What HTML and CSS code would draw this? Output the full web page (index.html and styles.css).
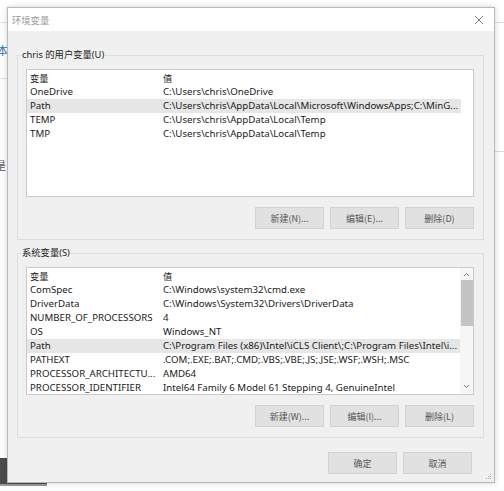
FILE: index.html
```html
<!DOCTYPE html>
<html>
<head>
    <meta charset="utf-8">
    <meta name="viewport" content="width=device-width, initial-scale=1">
    <link rel="stylesheet" href="styles.css">
</head>

<body>
    <div class="desktop">
        <div class="bgLine bgLineTop"></div>
        <div class="bgLine bgLineMid"></div>
        <div class="bgLine bgLineRight"></div>
        <span class="bgChar bgCharBlue">本</span>
        <span class="bgChar bgCharDark">是</span>
        <div class="taskBox"></div>

        <div class="dialog">
            <div class="titleBar">
                <span class="title">环境变量</span>
                <span class="closeBtn">
                    <svg width="10" height="10" viewBox="0 0 10 10">
                        <path d="M1 1 L9 9 M9 1 L1 9" stroke="#6d6d6d" stroke-width="0.9" fill="none"/>
                    </svg>
                </span>
            </div>

            <div class="dialogBody">
                <div class="group groupUser">
                    <span class="legend">chris 的用户变量(U)</span>
                    <div class="list listUser">
                        <table class="varTable">
                            <tr class="headRow"><td class="nameCol">变量</td><td>值</td></tr>
                            <tr><td class="nameCol">OneDrive</td><td>C:\Users\chris\OneDrive</td></tr>
                            <tr class="selRow"><td class="nameCol">Path</td><td>C:\Users\chris\AppData\Local\Microsoft\WindowsApps;C:\MinG...</td></tr>
                            <tr><td class="nameCol">TEMP</td><td>C:\Users\chris\AppData\Local\Temp</td></tr>
                            <tr><td class="nameCol">TMP</td><td>C:\Users\chris\AppData\Local\Temp</td></tr>
                        </table>
                    </div>
                    <div class="btnRow">
                        <button type="button" class="winButton">新建(N)...</button>
                        <button type="button" class="winButton">编辑(E)...</button>
                        <button type="button" class="winButton">删除(D)</button>
                    </div>
                </div>

                <div class="group groupSys">
                    <span class="legend">系统变量(S)</span>
                    <div class="list listSys">
                        <table class="varTable">
                            <tr class="headRow"><td class="nameCol">变量</td><td>值</td></tr>
                            <tr><td class="nameCol">ComSpec</td><td>C:\Windows\system32\cmd.exe</td></tr>
                            <tr><td class="nameCol">DriverData</td><td>C:\Windows\System32\Drivers\DriverData</td></tr>
                            <tr><td class="nameCol">NUMBER_OF_PROCESSORS</td><td>4</td></tr>
                            <tr><td class="nameCol">OS</td><td>Windows_NT</td></tr>
                            <tr class="selRow"><td class="nameCol">Path</td><td>C:\Program Files (x86)\Intel\iCLS Client\;C:\Program Files\Intel\i...</td></tr>
                            <tr><td class="nameCol">PATHEXT</td><td>.COM;.EXE;.BAT;.CMD;.VBS;.VBE;.JS;.JSE;.WSF;.WSH;.MSC</td></tr>
                            <tr><td class="nameCol">PROCESSOR_ARCHITECTU...</td><td>AMD64</td></tr>
                            <tr><td class="nameCol">PROCESSOR_IDENTIFIER</td><td>Intel64 Family 6 Model 61 Stepping 4, GenuineIntel</td></tr>
                        </table>
                        <div class="scrollBar">
                            <svg class="arrowUp" width="7" height="5" viewBox="0 0 7 5">
                                <path d="M1 4 L3.5 1.5 L6 4" stroke="#7a7a7a" stroke-width="1" fill="none"/>
                            </svg>
                            <div class="scrollThumb"></div>
                            <svg class="arrowDown" width="7" height="5" viewBox="0 0 7 5">
                                <path d="M1 1 L3.5 3.5 L6 1" stroke="#7a7a7a" stroke-width="1" fill="none"/>
                            </svg>
                        </div>
                    </div>
                    <div class="btnRow">
                        <button type="button" class="winButton">新建(W)...</button>
                        <button type="button" class="winButton">编辑(I)...</button>
                        <button type="button" class="winButton">删除(L)</button>
                    </div>
                </div>

                <div class="btnRow dialogButtons">
                    <button type="button" class="winButton">确定</button>
                    <button type="button" class="winButton">取消</button>
                </div>
            </div>

            <svg class="grip" width="6" height="6" viewBox="0 0 6 6">
                <rect x="4" y="0" width="1" height="1" fill="#b0b0b0"/>
                <rect x="2" y="2" width="1" height="1" fill="#b0b0b0"/>
                <rect x="4" y="2" width="1" height="1" fill="#b0b0b0"/>
                <rect x="0" y="4" width="1" height="1" fill="#b0b0b0"/>
                <rect x="2" y="4" width="1" height="1" fill="#b0b0b0"/>
                <rect x="4" y="4" width="1" height="1" fill="#b0b0b0"/>
            </svg>
        </div>
    </div>
</body>
</html>
```

FILE: styles.css
```css
body {
    margin: 0;
    background: #ffffff;
    font-family: "Noto Sans", "Noto Sans CJK SC", sans-serif;
    color: #1a1a1a;
}

.desktop {
    position: relative;
    width: 504px;
    height: 491px;
    overflow: hidden;
    background: #ffffff;
}

/* bits of the window behind the dialog */
.bgLine {
    position: absolute;
    height: 1px;
    background: #dedede;
}

.bgLineTop {
    left: 0;
    top: 22px;
    width: 504px;
}

.bgLineMid {
    left: 0;
    top: 78px;
    width: 8px;
}

.bgLineRight {
    left: 495px;
    top: 151px;
    width: 9px;
}

.bgChar {
    position: absolute;
    font-family: "Noto Sans CJK SC", sans-serif;
    font-size: 11px;
}

.bgCharBlue {
    left: -3px;
    top: 42px;
    color: #2f6fb8;
}

.bgCharDark {
    left: -5px;
    top: 157px;
    color: #555555;
}

.taskBox {
    position: absolute;
    left: 0;
    top: 458px;
    width: 47px;
    height: 26px;
    background: #4b4b4b;
    border-bottom: 2px solid #9a9a9a;
}

/* dialog window */
.dialog {
    position: absolute;
    left: 7px;
    top: 7px;
    width: 486px;
    height: 474px;
    border: 1px solid #b9b9b9;
    background: #f0f0f0;
    box-shadow: 0 0 6px rgba(0, 0, 0, 0.18);
    display: flex;
    flex-direction: column;
}

.titleBar {
    height: 23px;
    background: #ffffff;
    display: flex;
    align-items: center;
    justify-content: space-between;
    padding: 0 10px 0 4px;
}

.title {
    font-family: "Noto Sans CJK SC", sans-serif;
    font-size: 9.3px;
    color: #9a9a9a;
}

.closeBtn {
    display: flex;
    align-items: center;
}

.dialogBody {
    flex: 1;
    padding: 24px 10px 0 9px;
    display: flex;
    flex-direction: column;
}

.group {
    position: relative;
    border: 1px solid #dcdcdc;
    padding: 13px 9px 10px 8px;
}

.groupSys {
    margin-top: 13px;
}

.legend {
    position: absolute;
    left: 3px;
    top: -8px;
    padding: 0 1px;
    background: #f0f0f0;
    font-size: 9.3px;
    line-height: 14px;
    color: #222222;
}

.list {
    position: relative;
    background: #ffffff;
    border: 1px solid #c9c9c9;
}

.listUser {
    height: 126px;
}

.listSys {
    height: 126px;
}

.varTable {
    width: 434px;
    margin-top: 1px;
    table-layout: fixed;
    border-collapse: collapse;
    font-size: 9.7px;
}

.varTable td {
    height: 14px;
    padding: 0 0 0 3px;
    white-space: nowrap;
    overflow: hidden;
    line-height: 14px;
}

.varTable .nameCol {
    width: 130px;
}

.headRow td {
    font-family: "Noto Sans CJK SC", sans-serif;
    font-size: 9.3px;
}

.selRow td {
    background: #e6e6e6;
}

.scrollBar {
    position: absolute;
    right: 0;
    top: 0;
    bottom: 0;
    width: 13px;
    background: #f6f6f6;
    display: flex;
    flex-direction: column;
    align-items: center;
}

.arrowUp {
    margin-top: 4px;
}

.scrollThumb {
    width: 12px;
    height: 46px;
    margin-top: 3px;
    background: #c4c4c4;
}

.arrowDown {
    margin-top: auto;
    margin-bottom: 5px;
}

.btnRow {
    display: flex;
    justify-content: flex-end;
    gap: 6px;
    margin-top: 10px;
}

.dialogButtons {
    margin-top: 14px;
    padding-right: 12px;
}

.winButton {
    width: 69px;
    height: 22px;
    padding: 0;
    background: #e1e1e1;
    border: 1px solid #d2d2d2;
    font-family: "Noto Sans CJK SC", sans-serif;
    font-size: 9px;
    color: #555555;
}

.grip {
    position: absolute;
    right: 2px;
    bottom: 2px;
}
```
